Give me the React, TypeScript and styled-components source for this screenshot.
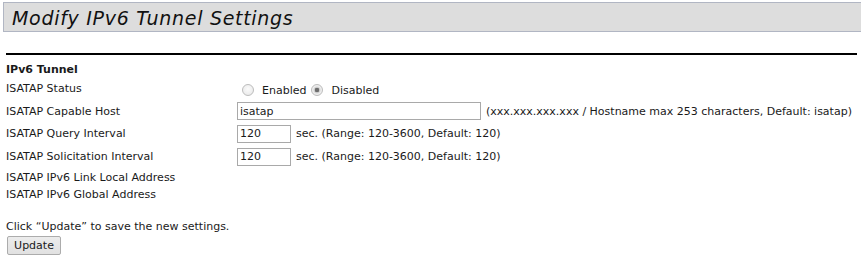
import styled, { createGlobalStyle } from 'styled-components';

const GlobalStyle = createGlobalStyle`
  html, body {
    margin: 0;
    padding: 0;
    background: #ffffff;
  }
  body {
    font-family: 'DejaVu Sans', Verdana, sans-serif;
    font-size: 11px;
    color: #1a1a1a;
  }
`;

const Page = styled.div`
  display: flex;
  flex-direction: column;
  width: 861px;
  height: 258px;
  overflow: hidden;
`;

const TitleBar = styled.div`
  display: flex;
  align-items: center;
  margin: 2px 0 0 3px;
  height: 28px;
  padding-left: 8px;
  background: #dddddd;
  border: 1px solid #b1b6c3;
  border-right: none;
  h1 {
    margin: 2px 0 0;
    font-size: 19px;
    letter-spacing: 0.7px;
    font-weight: normal;
    font-style: italic;
    color: #111111;
  }
`;

const Rule = styled.hr`
  margin: 21px 4px 0 6px;
  height: 2px;
  border: none;
  background: #000000;
`;

const Form = styled.div`
  display: flex;
  flex-direction: column;
  padding: 6px 0 0 6px;
`;

const Row = styled.div<{ $h: number }>`
  display: flex;
  align-items: center;
  height: ${(p) => p.$h}px;
`;

const SectionTitle = styled.div`
  font-weight: bold;
`;

const Label = styled.div`
  width: 231px;
  flex-shrink: 0;
`;

const RadioGroup = styled.label`
  display: flex;
  align-items: center;
  margin-top: 3px;
  input {
    appearance: none;
    box-sizing: border-box;
    margin: 0 8px 0 5px;
    width: 12px;
    height: 12px;
    border: 1px solid #bcbcbc;
    border-radius: 50%;
    background: radial-gradient(circle at 50% 40%, #fbfbfb, #e6e6e6);
  }
  input:checked {
    background: radial-gradient(circle, #6e6e6e 0 2px, #c9c9c9 2.5px, #eeeeee 4px);
  }
`;

const TextInput = styled.input<{ $w: number }>`
  box-sizing: border-box;
  width: ${(p) => p.$w}px;
  height: 18px;
  margin: 0;
  padding: 0 2px;
  border: 1px solid #a9a9a9;
  font-family: inherit;
  font-size: 11px;
  color: #1a1a1a;
  outline: none;
`;

const Hint = styled.span`
  margin-left: 5px;
  white-space: nowrap;
`;

const Note = styled.div`
  margin-top: 17px;
`;

const Button = styled.button`
  align-self: flex-start;
  margin: 3px 0 0 1px;
  width: 54px;
  height: 19px;
  padding: 0;
  border: 1px solid #acacac;
  border-radius: 2px;
  background: linear-gradient(#ececec, #e1e1e1);
  font-family: inherit;
  font-size: 11px;
  color: #1a1a1a;
`;

export default function App() {
  return (
    <Page>
      <GlobalStyle />
      <TitleBar>
        <h1>Modify IPv6 Tunnel Settings</h1>
      </TitleBar>
      <Rule />
      <Form>
        <Row $h={16}>
          <SectionTitle>IPv6 Tunnel</SectionTitle>
        </Row>
        <Row $h={23}>
          <Label>ISATAP Status</Label>
          <RadioGroup>
            <input type="radio" name="isatap" />
            Enabled
          </RadioGroup>
          <RadioGroup>
            <input type="radio" name="isatap" defaultChecked />
            Disabled
          </RadioGroup>
        </Row>
        <Row $h={22}>
          <Label>ISATAP Capable Host</Label>
          <TextInput $w={244} defaultValue="isatap" />
          <Hint>(xxx.xxx.xxx.xxx / Hostname max 253 characters, Default: isatap)</Hint>
        </Row>
        <Row $h={23}>
          <Label>ISATAP Query Interval</Label>
          <TextInput $w={54} defaultValue="120" />
          <Hint>sec. (Range: 120-3600, Default: 120)</Hint>
        </Row>
        <Row $h={23}>
          <Label>ISATAP Solicitation Interval</Label>
          <TextInput $w={54} defaultValue="120" />
          <Hint>sec. (Range: 120-3600, Default: 120)</Hint>
        </Row>
        <Row $h={18}>
          <Label>ISATAP IPv6 Link Local Address</Label>
        </Row>
        <Row $h={17}>
          <Label>ISATAP IPv6 Global Address</Label>
        </Row>
        <Note>Click “Update” to save the new settings.</Note>
        <Button>Update</Button>
      </Form>
    </Page>
  );
}
